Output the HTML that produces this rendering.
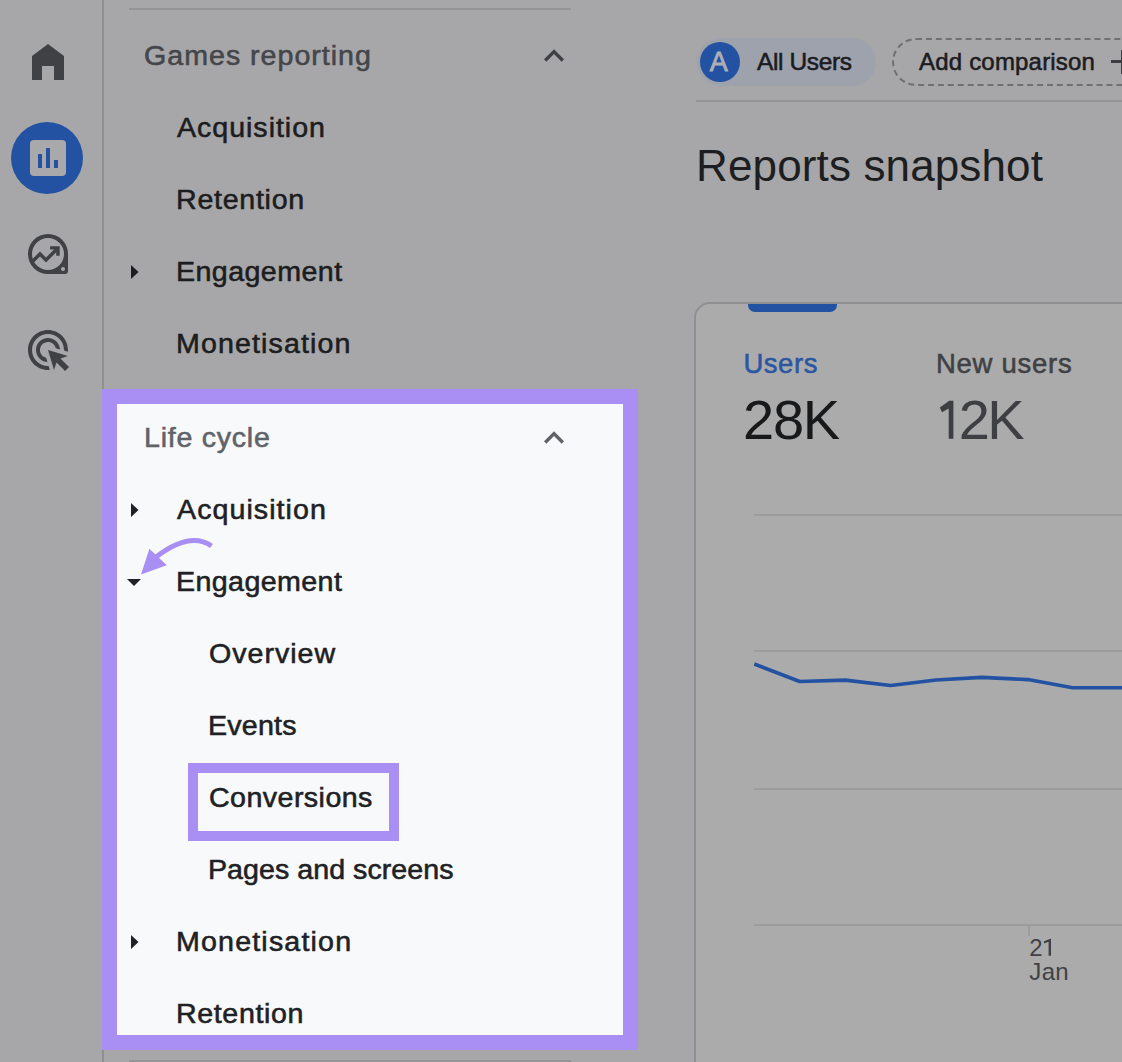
<!DOCTYPE html>
<html><head><meta charset="utf-8">
<style>
html,body{margin:0;padding:0;}
body{width:1122px;height:1062px;overflow:hidden;position:relative;background:#a7a7a9;font-family:"Liberation Sans",sans-serif;}
.a{position:absolute;}
.t{position:absolute;white-space:nowrap;line-height:1;}
.nav{font-size:27px;color:#1c1d20;-webkit-text-stroke:0.55px #1c1d20;}
.pn{font-size:27px;color:#202124;-webkit-text-stroke:0.55px #202124;}
</style></head><body>

<!-- left rail -->
<div class="a" style="left:102px;top:0;width:2px;height:1062px;background:#909092"></div>
<svg class="a" style="left:0;top:0" width="102" height="400" viewBox="0 0 102 400">
  <!-- home -->
  <path d="M32 56 L48 44 L64 56 L64 80 L54 80 L54 66 L42 66 L42 80 L32 80 Z" fill="#404145"/>
  <!-- reports -->
  <circle cx="47" cy="158" r="36" fill="#2352a2"/>
  <rect x="30" y="140" width="36" height="36" rx="4" fill="#a9a9ab"/>
  <rect x="38" y="154" width="4" height="14" fill="#2352a2"/>
  <rect x="46" y="148" width="4" height="20" fill="#2352a2"/>
  <rect x="54" y="160" width="4" height="8" fill="#2352a2"/>
  <!-- explore -->
  <path d="M48 234 A20 20 0 0 1 68 254 L68 271 A3 3 0 0 1 65 274 L48 274 A20 20 0 0 1 48 234 Z M48 238 A16 16 0 1 0 48 270 A16 16 0 1 0 48 238 Z" fill="#404145" fill-rule="evenodd"/>
  <circle cx="63" cy="269" r="2" fill="#a7a7a9"/>
  <path d="M31 263 L40 254 L46 260 L57.5 248.5" fill="none" stroke="#404145" stroke-width="3.5"/>
  <path d="M50.1 246.2 L59.7 246.2 L59.7 255.7 L56.2 255.7 L56.2 249.6 L50.1 249.6 Z" fill="#404145"/>
  <!-- advertising -->
  <g transform="translate(24,326) scale(2)">
    <path d="M11.71 17.99C8.53 17.84 6 15.22 6 12c0-3.31 2.69-6 6-6 3.22 0 5.84 2.530 5.99 5.71l-2.1-.63C15.480 9.31 13.89 8 12 8c-2.21 0-4 1.79-4 4 0 1.89 1.31 3.48 3.08 3.89l.63 2.1zM22 12c0 .3-.01.6-.04.9l-1.97-.59c.01-.1.01-.21.01-.31 0-4.42-3.58-8-8-8s-8 3.58-8 8 3.58 8 8 8c.1 0 .21 0 .31-.01l.59 1.97c-.3.03-.6.04-.9.04-5.52 0-10-4.480-10-10S6.48 2 12 2s10 4.48 10 10zm-3.77 4.26L22 15l-10-3 3 10 1.26-3.77 4.27 4.27 1.98-1.98-4.28-4.26z" fill="#404145"/>
  </g>
</svg>

<!-- nav top separator -->
<div class="a" style="left:129px;top:8px;width:442px;height:2px;background:#959597"></div>
<div class="t" id="gr" style="left:144.00px;top:43px;font-size:27px;color:#45464a;-webkit-text-stroke:0.55px #45464a;transform-origin:0 0;transform:scaleX(1.06);letter-spacing:0.929px;">Games reporting</div>
<svg class="a" style="left:534px;top:36px" width="40" height="40" viewBox="0 0 24 24"><path d="M12 8l-6 6 1.41 1.41L12 10.83l4.59 4.58L18 14z" fill="#3f4044"/></svg>
<div class="t nav" id="g1" style="left:177.00px;top:115px;transform-origin:0 0;transform:scaleX(1.06);letter-spacing:0.900px;">Acquisition</div>
<div class="t nav" id="g2" style="left:175.60px;top:187px;transform-origin:0 0;transform:scaleX(1.06);letter-spacing:0.671px;">Retention</div>
<svg class="a" style="left:131px;top:264px" width="8" height="16" viewBox="0 0 8 16"><path d="M0 1 L7.5 8 L0 15 Z" fill="#1c1d20"/></svg>
<div class="t nav" id="g3" style="left:175.70px;top:259px;transform-origin:0 0;transform:scaleX(1.06);letter-spacing:0.398px;">Engagement</div>
<div class="t nav" id="g4" style="left:176.00px;top:331px;transform-origin:0 0;transform:scaleX(1.06);letter-spacing:1.034px;">Monetisation</div>

<!-- highlighted panel -->
<div class="a" style="left:102px;top:389px;width:506px;height:631px;border:15px solid #a98ff4;background:#f8f9fa"></div>
<div class="t" id="lc" style="left:143.80px;top:425px;font-size:27px;color:#5f6368;-webkit-text-stroke:0.55px #5f6368;transform-origin:0 0;transform:scaleX(1.06);letter-spacing:0.689px;">Life cycle</div>
<svg class="a" style="left:534px;top:418px" width="40" height="40" viewBox="0 0 24 24"><path d="M12 8l-6 6 1.41 1.41L12 10.83l4.59 4.58L18 14z" fill="#5f6368"/></svg>
<svg class="a" style="left:131px;top:502px" width="8" height="16" viewBox="0 0 8 16"><path d="M0 1 L7.5 8 L0 15 Z" fill="#202124"/></svg>
<div class="t pn" id="p1" style="left:176.80px;top:497px;transform-origin:0 0;transform:scaleX(1.06);letter-spacing:0.990px;">Acquisition</div>
<svg class="a" style="left:126px;top:578px" width="16" height="9" viewBox="0 0 16 9"><path d="M1 1 L15 1 L8 8 Z" fill="#202124"/></svg>
<div class="t pn" id="p2" style="left:176.30px;top:569px;transform-origin:0 0;transform:scaleX(1.06);letter-spacing:0.376px;">Engagement</div>
<div class="t pn" id="p3" style="left:208.50px;top:641px;transform-origin:0 0;transform:scaleX(1.06);letter-spacing:0.929px;">Overview</div>
<div class="t pn" id="p4" style="left:208.00px;top:713px;transform-origin:0 0;transform:scaleX(1.06);letter-spacing:0.200px;">Events</div>
<div class="a" style="left:188px;top:763px;width:191px;height:58px;border:10px solid #a98ff4"></div>
<div class="t pn" id="p5" style="left:208.50px;top:785px;transform-origin:0 0;transform:scaleX(1.06);letter-spacing:0.410px;">Conversions</div>
<div class="t pn" id="p6" style="left:208.00px;top:857px;transform-origin:0 0;transform:scaleX(1.06);letter-spacing:0.025px;">Pages and screens</div>
<svg class="a" style="left:131px;top:934px" width="8" height="16" viewBox="0 0 8 16"><path d="M0 1 L7.5 8 L0 15 Z" fill="#202124"/></svg>
<div class="t pn" id="p7" style="left:176.40px;top:929px;transform-origin:0 0;transform:scaleX(1.06);letter-spacing:1.098px;">Monetisation</div>
<div class="t pn" id="p8" style="left:176.00px;top:1001px;transform-origin:0 0;transform:scaleX(1.06);letter-spacing:0.575px;">Retention</div>
<!-- purple arrow -->
<svg class="a" style="left:130px;top:530px" width="90" height="50" viewBox="130 530 90 50">
  <path d="M211.5 546 Q190 531 156 557" fill="none" stroke="#a98ff4" stroke-width="5"/>
  <path d="M141 574.6 L149.4 548.7 L166.8 565.2 Z" fill="#a98ff4"/>
</svg>
<!-- bottom separator -->
<div class="a" style="left:129px;top:1060px;width:442px;height:2px;background:#959597"></div>

<!-- content -->
<div class="a" style="left:697px;top:38px;width:179px;height:48px;border-radius:24px;background:#9ea2ad"></div>
<div class="a" style="left:700px;top:42px;width:40px;height:40px;border-radius:20px;background:#2352a2"></div>
<div class="t" id="ca" style="left:709.80px;top:49px;font-size:27px;color:#adafb4;-webkit-text-stroke:0.8px #adafb4;">A</div>
<div class="t" id="c1" style="left:757.00px;top:50px;font-size:24.5px;color:#1b1c1f;-webkit-text-stroke:0.55px #1b1c1f;letter-spacing:-0.375px;">All Users</div>
<div class="a" style="left:892px;top:38px;width:260px;height:44px;border:2px dashed #707073;border-radius:24px"></div>
<div class="t" id="c2" style="left:919.00px;top:50px;font-size:24px;color:#1b1c1f;-webkit-text-stroke:0.55px #1b1c1f;letter-spacing:0.193px;">Add comparison</div>
<div class="a" style="left:1111px;top:60px;width:11px;height:3px;background:#3c3d41"></div>
<div class="a" style="left:1120.5px;top:50px;width:3px;height:24px;background:#3c3d41"></div>
<div class="a" style="left:696px;top:100px;width:426px;height:2px;background:#959597"></div>
<div class="t" id="c3" style="left:696.00px;top:144px;font-size:44px;color:#1d1e21;letter-spacing:0.137px;">Reports snapshot</div>

<!-- card -->
<div class="a" style="left:694px;top:302px;width:460px;height:800px;border:2px solid #909092;border-radius:16px;background:#ababab"></div>
<div class="a" style="left:748px;top:304px;width:89px;height:8px;background:#2352a2;border-radius:0 0 7px 7px"></div>
<div class="t" id="c4" style="left:743.40px;top:350px;font-size:27.5px;color:#2b56a2;-webkit-text-stroke:0.55px #2b56a2;letter-spacing:0.550px;">Users</div>
<div class="t" id="c5" style="left:936.00px;top:350px;font-size:27.5px;color:#404145;-webkit-text-stroke:0.55px #404145;letter-spacing:0.725px;">New users</div>
<div class="t" id="c6" style="left:743.00px;top:392px;font-size:56px;color:#18191b;letter-spacing:-1.250px;">28K</div>
<div class="t" id="c7" style="left:958.80px;top:392px;font-size:56px;color:#3e3f43;letter-spacing:-2.600px;">2K</div>
<svg class="a" style="left:935px;top:396px" width="24" height="48" viewBox="935 396 24 48"><path d="M939.8 407.6 L949.2 400.7 L953.4 400.7 L953.4 438.8 L948.7 438.8 L948.7 408.6 L942 412.2 Z" fill="#3e3f43"/></svg>
<div class="a" style="left:754px;top:514px;width:368px;height:2px;background:#9c9c9e"></div>
<div class="a" style="left:754px;top:650px;width:368px;height:2px;background:#9c9c9e"></div>
<div class="a" style="left:754px;top:788px;width:368px;height:2px;background:#9c9c9e"></div>
<div class="a" style="left:754px;top:924px;width:368px;height:2px;background:#9c9c9e"></div>
<div class="a" style="left:1028px;top:925px;width:2px;height:11px;background:#9c9c9e"></div>
<svg class="a" style="left:740px;top:640px" width="382" height="60" viewBox="740 640 382 60">
  <polyline points="754.3,664 799.7,681.5 845.2,680.1 890.6,685.5 936,680 981.7,677.4 1028,679.6 1072.6,687.8 1125,687.8" fill="none" stroke="#2352a2" stroke-width="3.6" stroke-linejoin="round"/>
</svg>
<div class="t" id="c8" style="left:1029.20px;top:936px;font-size:24px;color:#404145;letter-spacing:-0.500px;">2</div>
<svg class="a" style="left:1040px;top:935px" width="15" height="25" viewBox="1040 935 15 25"><path d="M1048.6 955.8 L1051 955.8 L1051 938.7 L1050.3 938.7 L1044 941.2 L1044 943.4 L1048.6 941.8 Z" fill="#404145"/></svg>
<div class="t" id="c9" style="left:1029.30px;top:960px;font-size:24px;color:#404145;letter-spacing:0.350px;">Jan</div>

</body></html>
